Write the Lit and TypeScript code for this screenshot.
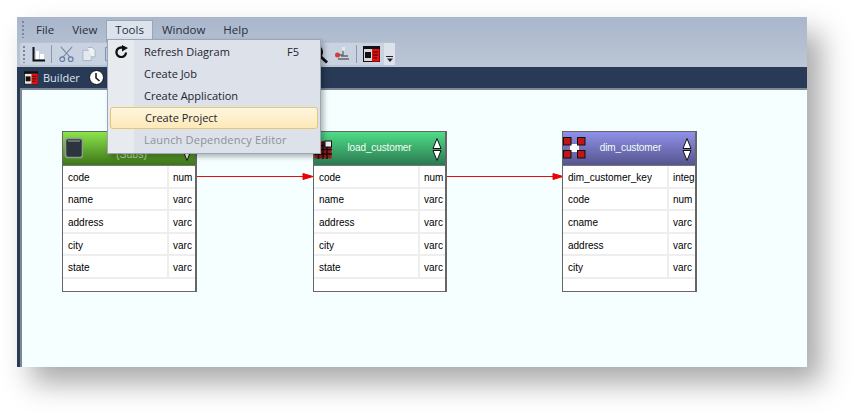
import { LitElement, html, css, svg } from "lit";
import { customElement, property } from "lit/decorators.js";

type Row = [string, string];

@customElement("db-node")
class DbNode extends LitElement {
  @property() kind = "stage";
  @property() label = "";
  @property({ attribute: false }) rows: Row[] = [];
  static styles = css`
    :host { display: flex; flex-direction: column; height: 161px; box-sizing: border-box; border: 1px solid #666; border-right-width: 2px; background: #fff; font: 10px "Liberation Sans", Arial, sans-serif; color: #000; }
    .head { height: 33px; flex: none; display: flex; align-items: center; border-bottom: 1px solid #777; color: #f2fff2; }
    .head.stage { background: linear-gradient(#4fdc88, #2a7a50); }
    .head.dim { background: linear-gradient(#9090ea, #55558f); }
    .head.source { background: linear-gradient(#8ce44c, #3d7518); }
    .ico { width: 20px; height: 24px; flex: none; display: block; }
    .dim .ico { width: 23px; }
    .name { flex: 1; text-align: center; padding: 0 5px 2px 0; letter-spacing: -0.120px; }
    .source .name { padding: 11px 0 0 0; font-size: 10.500px; color: #c4dcae; letter-spacing: 0; }
    .arr { width: 14px; height: 26px; flex: none; margin-right: 1px; display: block; }
    .row { display: flex; height: 22.600px; box-sizing: border-box; border-bottom: 2px solid #eee; align-items: center; }
    .a { width: 106px; padding: 2px 0 0 5px; box-sizing: border-box; border-right: 2px solid #eee; height: 100%; display: flex; align-items: center; }
    .b { flex: 1; padding: 2px 0 0 4px; white-space: nowrap; }
  `;
  icon() {
    if (this.kind === "source")
      return html`<svg class="ico" viewBox="0 0 20 24"><rect x="2.500" y="1.500" width="17" height="19" rx="2.500" fill="#2c3440" stroke="#8f9d8a" stroke-width="1.600"/><rect x="5" y="3" width="12" height="2" fill="#66736a"/></svg>`;
    if (this.kind === "stage")
      return html`<svg class="ico" viewBox="0 0 20 24"><rect x="0.500" y="4.500" width="17" height="17" fill="#a01818"/><path d="M0 8.500h18M0 12.500h18M0 17h18M4.500 4v18M9 4v18M13 4v18" stroke="#111" stroke-width="1.400"/><rect x="11" y="4" width="6.500" height="6" fill="#eee" stroke="#111"/></svg>`;
    return html`<svg class="ico" viewBox="0 0 23 24"><rect x="7" y="7" width="9" height="8" fill="#fff"/><g fill="#c01616" stroke="#111"><rect x="0.500" y="0.500" width="7.500" height="7.500"/><rect x="14.500" y="0.500" width="7.500" height="7.500"/><rect x="0.500" y="13.500" width="7.500" height="7.500"/><rect x="14.500" y="13.500" width="7.500" height="7.500"/></g></svg>`;
  }
  render() {
    return html`<div class="head ${this.kind}">
        ${this.icon()}
        <span class="name">${this.label}</span>
        <svg class="arr" viewBox="0 0 14 26"><path d="M7 2.500L3 12.500H11Z" fill="#fff" stroke="#111"/><path d="M7 24.500L3 14.500H11Z" fill="#fff" stroke="#111"/></svg>
      </div>
      <div>
        ${this.rows.map((r) => html`<div class="row"><div class="a">${r[0]}</div><div class="b">${r[1]}</div></div>`)}
      </div>`;
  }
}

const SRC: Row[] = [["code", "num"], ["name", "varc"], ["address", "varc"], ["city", "varc"], ["state", "varc"]];
const DIM: Row[] = [["dim_customer_key", "integ"], ["code", "num"], ["cname", "varc"], ["address", "varc"], ["city", "varc"]];

@customElement("app-root")
class AppRoot extends LitElement {
  static styles = css`
    :host { display: block; width: 855px; height: 415px; box-sizing: border-box; padding: 17px 0 0 17px; background: #fff; overflow: hidden; font: 11px "Open Sans", "Noto Sans", sans-serif; color: #1c2430; }
    .win { width: 790px; height: 350px; display: flex; flex-direction: column; position: relative; box-shadow: 14px 16px 27px rgba(0,0,0,.34); background: #283a56; }
    .top { background: linear-gradient(#a9b6cb, #bcc6d6); height: 50px; flex: none; display: flex; flex-direction: column; }
    .menubar { height: 25px; flex: none; display: flex; align-items: center; padding-left: 5px; font-size: 11.500px; }
    .grip { width: 3px; height: 17px; flex: none; background-image: linear-gradient(#7c8798 50%, transparent 50%); background-size: 2px 4px; background-repeat: repeat-y; }
    .mi { padding: 0 9px; height: 22px; line-height: 21px; white-space: nowrap; color: #26303f; }
    .mi.file { margin-left: 2px; }
    .mi.open { background: #dde3ec; border: 1px solid #9aa5b5; border-bottom: 0; box-sizing: border-box; margin-top: 3px; line-height: 18px; padding: 0 8px; }
    .toolbar { width: 376px; height: 24px; margin-left: 2px; background: #c8d2e1; border-radius: 3px; display: flex; align-items: center; padding-left: 3px; box-sizing: border-box; border: 1px solid #b7c2d3; border-right: 0; }
    .toolbar svg { display: block; flex: none; }
    .gap { flex: 1; }
    .sep { width: 1px; height: 18px; background: #8d98a8; flex: none; }
    .over { width: 11px; height: 22px; flex: none; background: #dde3ec; display: flex; align-items: flex-end; justify-content: center; padding-bottom: 3px; box-sizing: border-box; }
    .tabs { height: 21px; flex: none; display: flex; align-items: center; padding-left: 7px; color: #dfe6f0; }
    .tab { display: inline-flex; align-items: center; gap: 5px; }
    .work { flex: 1; min-height: 0; margin-left: 3px; border-left: 2px solid #7e8794; border-top: 2px solid #7e8794; background: #f5ffff; position: relative; }
    .wire { position: absolute; left: 0; top: 0; }
    .node { position: absolute; top: 41px; }
    .menu { position: absolute; left: 90px; top: 22px; width: 214px; height: 115px; box-sizing: border-box; border: 1px solid #9aa5b5; background: linear-gradient(90deg, #e7ebf0 26px, #dde1e9 26px); box-shadow: 3px 3px 5px rgba(0,0,0,.28); padding-top: 1px; z-index: 2; }
    .item { height: 22px; display: flex; align-items: center; padding: 0 21px 2px 36px; justify-content: space-between; position: relative; box-sizing: border-box; color: #1c2430; }
    .item.hot { background: linear-gradient(#fdf6dd, #fde9b8); border: 1px solid #e3c67a; border-radius: 3px; margin: 0 2px; padding-left: 34px; padding-right: 19px; }
    .item.off { color: #8a919c; letter-spacing: 0.200px; }
    .refresh { position: absolute; left: 6px; top: 4px; }
  `;
  render() {
    return html`<div class="win">
      <div class="top">
        <div class="menubar">
          <div class="grip"></div>
          <div class="mi file">File</div><div class="mi">View</div>
          <div class="mi open">Tools</div>
          <div class="mi">Window</div><div class="mi">Help</div>
        </div>
        <div class="toolbar">
          <div class="grip"></div>
          <svg width="13" height="17" viewBox="0 0 13 17" style="margin-left:6px"><path d="M1.500 1V14.500H13" fill="none" stroke="#111" stroke-width="2"/><path d="M4 5h3v8H4zM8 8h4v5H8z" fill="#fff"/></svg>
          <div class="sep" style="margin-left:6px"></div>
          <svg width="15" height="16" viewBox="0 0 16 17" style="margin-left:7px"><path d="M2 1L12 12M14 1L4 12" stroke="#7d8ea6" stroke-width="1.200"/><circle cx="3.500" cy="14" r="2.500" fill="none" stroke="#5f7da6" stroke-width="1.300"/><circle cx="12.500" cy="14" r="2.500" fill="none" stroke="#5f7da6" stroke-width="1.300"/></svg>
          <svg width="14" height="16" viewBox="0 0 15 16" style="margin-left:8px"><path d="M1 4h7l2 2v9H1z" fill="#e4e9f0" stroke="#aab4c2"/><path d="M6 1h5l3 3v7H10" fill="#eef1f5" stroke="#aab4c2"/></svg>
          <svg width="6" height="16" viewBox="0 0 6 16" style="margin-left:8px"><path d="M6 1.500H1.500V14.500H6" fill="none" stroke="#7d95b8"/></svg>
          <div class="gap"></div>
          <svg width="21" height="20" viewBox="0 0 21 20"><circle cx="8" cy="8" r="6" fill="none" stroke="#111" stroke-width="2.200"/><path d="M12.500 12.500l6.500 6" stroke="#111" stroke-width="3"/></svg>
          <svg width="16" height="16" viewBox="0 0 16 16" style="margin-left:5px"><rect x="8" y="1" width="3" height="3" fill="#e8e8e8"/><path d="M9 5v4H5M4 13h11M7 10h7" fill="none" stroke="#666" stroke-width="1.300"/><circle cx="3.500" cy="9" r="2.500" fill="#d23b3b"/></svg>
          <div class="sep" style="margin-left:6px"></div>
          <svg width="17" height="16" viewBox="0 0 17 16" style="margin-left:6px"><rect x="0.500" y="0.500" width="16" height="15" fill="#d8d8d8" stroke="#111"/><rect width="17" height="3" fill="#111"/><rect x="9" y="3" width="7.500" height="12.500" fill="#ee0c0c"/><rect x="2" y="6" width="6" height="6" fill="#111"/><path d="M10 6h5M10 9h5M10 12h4" stroke="#111"/></svg>
          <div style="width:4px"></div>
          <div class="over"><svg width="8" height="6" viewBox="0 0 8 6"><path d="M0 .5h7" stroke="#222"/><path d="M1 2.500h6L4 6z" fill="#222"/></svg></div>
        </div>
      </div>
      <div class="tabs">
        <span class="tab">
          <svg width="14" height="14" viewBox="0 0 17 16"><rect x="0.500" y="0.500" width="16" height="15" fill="#e8e8e8" stroke="#111"/><rect width="17" height="3" fill="#111"/><rect x="9" y="3" width="7.500" height="12.500" fill="#ee0c0c"/><rect x="2" y="6" width="6" height="6" fill="#111"/><path d="M10 6h5M10 9h5M10 12h4" stroke="#111"/></svg>
          <span>Builder</span>
        </span>
        <svg width="15" height="15" viewBox="0 0 15 15" style="margin-left:9px"><circle cx="7.500" cy="7.500" r="7" fill="#fff" stroke="#111"/><path d="M7 3v5l3.500 3" fill="none" stroke="#111" stroke-width="1.500"/></svg>
      </div>
      <div class="work">
        <svg class="wire" width="768" height="258">${svg`
          <path d="M175 86.500H291M425 86.500H541" stroke="#e31010" fill="none"/>
          <path d="M281 83.500L291 86.500L281 89.500ZM531 83.500L541 86.500L531 89.500Z" fill="#ee0000" stroke="#ee0000"/>`}</svg>
        <db-node class="node" style="left:40px;width:135px" kind="source" label="(Subs)" .rows=${SRC}></db-node>
        <db-node class="node" style="left:291px;width:134px" kind="stage" label="load_customer" .rows=${SRC}></db-node>
        <db-node class="node" style="left:540px;width:135px" kind="dim" label="dim_customer" .rows=${DIM}></db-node>
      </div>
      <div class="menu">
        <div class="item">
          <svg class="refresh" width="15" height="13" viewBox="0 0 15 13"><path d="M12 7.500a4.800 4.800 0 1 1-4.500-5H9" fill="none" stroke="#111" stroke-width="2.300"/><path d="M8 0v6.500L14 3z" fill="#111"/></svg>
          <span>Refresh Diagram</span><span>F5</span>
        </div>
        <div class="item">Create Job</div>
        <div class="item">Create Application</div>
        <div class="item hot">Create Project</div>
        <div class="item off">Launch Dependency Editor</div>
      </div>
    </div>`;
  }
}
